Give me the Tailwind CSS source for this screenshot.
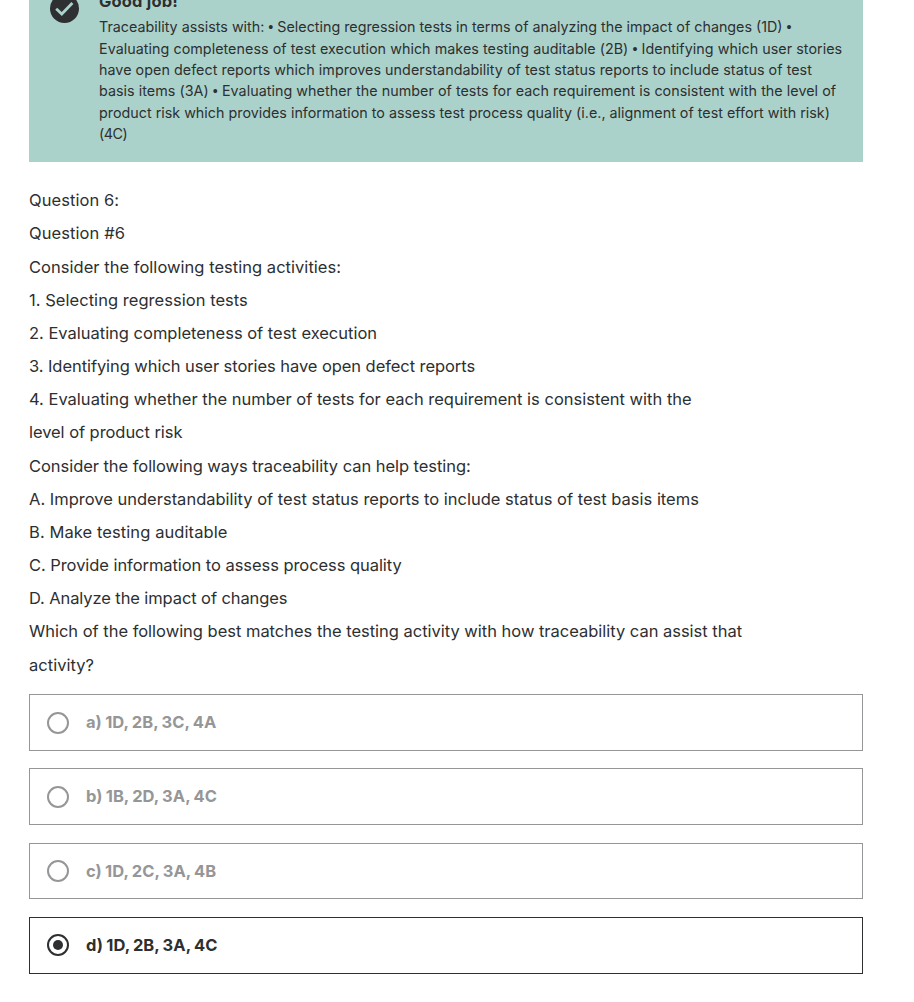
<!DOCTYPE html>
<html lang="en">
<head>
<meta charset="utf-8">
<title>Question 6</title>
<script src="https://cdn.jsdelivr.net/npm/@tailwindcss/browser@4"></script>
</head>
<body class="bg-white font-['Inter','Liberation_Sans',sans-serif] text-[#2d2f31]">
<main class="ml-[29px] w-[834px] h-[1002px] overflow-hidden">
  <section class="flex h-[162px] items-end overflow-hidden bg-[#abd2ca] pl-[21px] pb-[17.4px]">
    <svg class="mb-[121.6px] h-[29px] w-[29px] shrink-0" viewBox="0 0 29 29" fill="none">
      <circle cx="14.5" cy="14.5" r="14.5" fill="#2d2f31"/>
      <path d="M6.2 14.7L11.8 20L22.4 9.1" stroke="#abd2ca" stroke-width="2.8"/>
    </svg>
    <div class="ml-5 whitespace-nowrap">
      <h2 class="text-[16.5px] leading-[22px] mb-[4.1px] font-bold tracking-[0.167px]">Good job!</h2>
      <div class="text-[14.3px] leading-[21.4px]">
        <p>Traceability assists with: <span class="font-['Liberation_Sans'] leading-none">•</span> Selecting regression tests in terms of analyzing the impact of changes (1D) <span class="font-['Liberation_Sans'] leading-none">•</span></p>
        <p class="tracking-[0.048px]">Evaluating completeness of test execution which makes testing auditable (2B) <span class="font-['Liberation_Sans'] leading-none">•</span> Identifying which user stories</p>
        <p class="tracking-[0.045px]">have open defect reports which improves understandability of test status reports to include status of test</p>
        <p class="tracking-[0.043px]">basis items (3A) <span class="font-['Liberation_Sans'] leading-none">•</span> Evaluating whether the number of tests for each requirement is consistent with the level of</p>
        <p class="tracking-[0.01px]">product risk which provides information to assess test process quality (i.e., alignment of test effort with risk)</p>
        <p class="tracking-[-0.45px]">(4C)</p>
      </div>
    </div>
  </section>
  <section class="mt-[22.25px] text-[16.5px] leading-[33.167px] whitespace-nowrap">
    <p class="tracking-[0.058px]">Question 6:</p>
    <p class="tracking-[0.085px]">Question #6</p>
    <p class="tracking-[0.029px]">Consider the following testing activities:</p>
    <p class="tracking-[0.04px]">1. Selecting regression tests</p>
    <p class="tracking-[-0.011px]">2. Evaluating completeness of test execution</p>
    <p class="tracking-[-0.07px]">3. Identifying which user stories have open defect reports</p>
    <p>4. Evaluating whether the number of tests for each requirement is consistent with the</p>
    <p class="tracking-[-0.06px]">level of product risk</p>
    <p class="tracking-[-0.05px]">Consider the following ways traceability can help testing:</p>
    <p>A. Improve understandability of test status reports to include status of test basis items</p>
    <p class="tracking-[0.085px]">B. Make testing auditable</p>
    <p class="tracking-[-0.06px]">C. Provide information to assess process quality</p>
    <p class="tracking-[-0.1px]">D. Analyze the impact of changes</p>
    <p class="tracking-[-0.019px]">Which of the following best matches the testing activity with how traceability can assist that</p>
    <p class="tracking-[0.024px]">activity?</p>
  </section>
  <ul class="mt-[12.25px] flex flex-col text-[16.5px] font-bold leading-6 tracking-[0.04px] [word-spacing:-0.7px] text-[#959697]">
    <li class="flex h-[57px] items-center gap-[17px] border border-[#959697] pl-[17px]">
      <span class="size-[22px] rounded-full border-2 border-[#959697]"></span><span class="pb-0.5">a) 1D, 2B, 3C, 4A</span>
    </li>
    <li class="mt-[17px] flex h-[57px] items-center gap-[17px] border border-[#959697] pl-[17px]">
      <span class="size-[22px] rounded-full border-2 border-[#959697]"></span><span class="pb-0.5">b) 1B, 2D, 3A, 4C</span>
    </li>
    <li class="mt-[18px] flex h-[56px] items-center gap-[17px] border border-[#959697] pl-[17px]">
      <span class="size-[22px] rounded-full border-2 border-[#959697]"></span><span class="pb-px">c) 1D, 2C, 3A, 4B</span>
    </li>
    <li class="mt-[18px] flex h-[57px] items-center gap-[17px] border border-[#2d2f31] pl-[17px] pb-px text-[#2d2f31]">
      <span class="flex size-[22px] items-center justify-center rounded-full border-2 border-[#2d2f31]"><span class="size-[10px] rounded-full bg-[#2d2f31]"></span></span><span class="pb-px">d) 1D, 2B, 3A, 4C</span>
    </li>
  </ul>
</main>
</body>
</html>
